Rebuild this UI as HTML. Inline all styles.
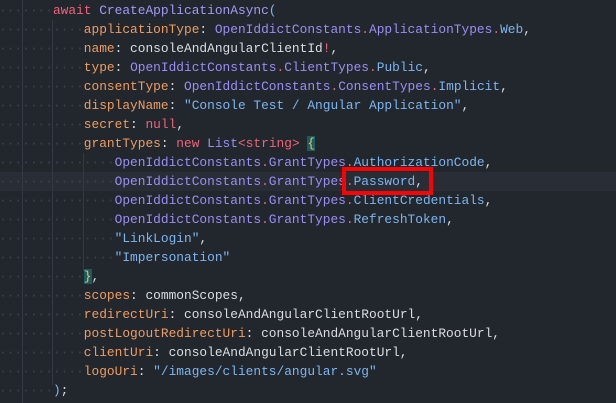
<!DOCTYPE html><html><head><style>
body{margin:0;width:616px;height:403px;background:#22262d;overflow:hidden;position:relative}
pre{position:absolute;left:-1px;top:1px;margin:0;font-family:"Liberation Mono",monospace;font-size:12.85px;line-height:19px;color:#dadde2;white-space:pre}
.w{color:#3c424b}.k{color:#f0637a}.p{color:#ee9d62}.t{color:#9b8ef4}.s{color:#7db6f0}.o{color:#e06c7a}.f{color:#a39af5}
.g{position:absolute;top:0;width:1px;background:#343942}
.cur{position:absolute;left:0;top:172px;width:616px;height:19px;background:#292e36}
.box{position:absolute;left:342px;top:167px;width:83px;height:20px;border:4px solid #f00}
.br{background:#1e5c5c}
</style></head><body>
<div class="cur"></div>
<div class="g" style="left:22px;height:403px"></div>
<div class="g" style="left:52px;top:20px;height:365px"></div>
<div class="g" style="left:83px;top:153px;height:118px"></div>
<pre><span class="w">·······</span><span class="k">await</span> <span class="f">CreateApplicationAsync</span><span class="s">(</span>
<span class="w">···········</span><span class="p">applicationType</span>: <span class="t">OpenIddictConstants</span><span class="o">.</span><span class="t">ApplicationTypes</span><span class="o">.</span><span class="s">Web</span>,
<span class="w">···········</span><span class="p">name</span>: consoleAndAngularClientId<span class="k">!</span>,
<span class="w">···········</span><span class="p">type</span>: <span class="t">OpenIddictConstants</span><span class="o">.</span><span class="t">ClientTypes</span><span class="o">.</span><span class="s">Public</span>,
<span class="w">···········</span><span class="p">consentType</span>: <span class="t">OpenIddictConstants</span><span class="o">.</span><span class="t">ConsentTypes</span><span class="o">.</span><span class="s">Implicit</span>,
<span class="w">···········</span><span class="p">displayName</span>: <span class="s">"Console Test / Angular Application"</span>,
<span class="w">···········</span><span class="p">secret</span>: <span class="k">null</span>,
<span class="w">···········</span><span class="p">grantTypes</span>: <span class="k">new</span> <span class="t">List</span><span class="o">&lt;</span><span class="k">string</span><span class="o">&gt;</span> <span class="br" style="color:#e5c07b">{</span>
<span class="w">···············</span><span class="t">OpenIddictConstants</span><span class="o">.</span><span class="t">GrantTypes</span><span class="o">.</span><span class="s">AuthorizationCode</span>,
<span class="w">···············</span><span class="t">OpenIddictConstants</span><span class="o">.</span><span class="t">GrantTypes</span><span class="o">.</span><span class="s">Password</span>,
<span class="w">···············</span><span class="t">OpenIddictConstants</span><span class="o">.</span><span class="t">GrantTypes</span><span class="o">.</span><span class="s">ClientCredentials</span>,
<span class="w">···············</span><span class="t">OpenIddictConstants</span><span class="o">.</span><span class="t">GrantTypes</span><span class="o">.</span><span class="s">RefreshToken</span>,
<span class="w">···············</span><span class="s">"LinkLogin"</span>,
<span class="w">···············</span><span class="s">"Impersonation"</span>
<span class="w">···········</span><span class="br" style="color:#e5c07b">}</span>,
<span class="w">···········</span><span class="p">scopes</span>: commonScopes,
<span class="w">···········</span><span class="p">redirectUri</span>: consoleAndAngularClientRootUrl,
<span class="w">···········</span><span class="p">postLogoutRedirectUri</span>: consoleAndAngularClientRootUrl,
<span class="w">···········</span><span class="p">clientUri</span>: consoleAndAngularClientRootUrl,
<span class="w">···········</span><span class="p">logoUri</span>: <span class="s">"/images/clients/angular.svg"</span>
<span class="w">·······</span><span class="s">)</span>;</pre>
<div class="box"></div>
</body></html>
